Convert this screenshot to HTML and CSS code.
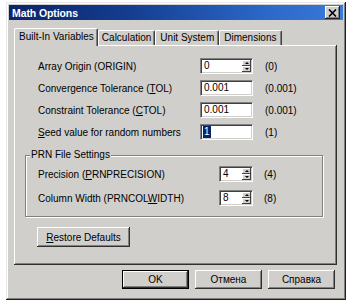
FILE: index.html
```html
<!DOCTYPE html>
<html>
<head>
<meta charset="utf-8">
<link rel="stylesheet" href="styles.css">
</head>
<body>
<div class="dialog">
  <div class="titlebar">
    <span class="title">Math Options</span>
    <span class="close"><svg width="9" height="8" viewBox="0 0 9 8"><path d="M1 0.5 L8 7.5 M8 0.5 L1 7.5" stroke="#000" stroke-width="1.6"/></svg></span>
  </div>
  <div class="content">
    <div class="tabs">
      <div class="tab active">Built-In Variables</div>
      <div class="tab">Calculation</div>
      <div class="tab">Unit System</div>
      <div class="tab">Dimensions</div>
    </div>
    <div class="panel">
      <div class="vars">
        <span class="lbl">Array Origin (ORIGIN)</span>
        <div class="field"><span class="val">0</span><span class="spinner"><span class="up"></span><span class="down"></span></span></div>
        <span class="def">(0)</span>

        <span class="lbl">Convergence Tolerance (<u>T</u>OL)</span>
        <div class="field"><span class="val">0.001</span></div>
        <span class="def">(0.001)</span>

        <span class="lbl">Constraint Tolerance (<u>C</u>TOL)</span>
        <div class="field"><span class="val">0.001</span></div>
        <span class="def">(0.001)</span>

        <span class="lbl"><u>S</u>eed value for random numbers</span>
        <div class="field"><span class="val sel">1</span></div>
        <span class="def">(1)</span>
      </div>
      <div class="group">
        <div class="group-title">PRN File Settings</div>
        <div class="prn">
          <span class="lbl">Precision (<u>P</u>RNPRECISION)</span>
          <div class="field"><span class="val">4</span><span class="spinner"><span class="up"></span><span class="down"></span></span></div>
          <span class="def">(4)</span>

          <span class="lbl">Column Width (PRNCOL<u>W</u>IDTH)</span>
          <div class="field"><span class="val">8</span><span class="spinner"><span class="up"></span><span class="down"></span></span></div>
          <span class="def">(8)</span>
        </div>
      </div>
      <button class="btn restore"><u>R</u>estore Defaults</button>
    </div>
    <div class="actions">
      <button class="btn ok">OK</button>
      <button class="btn">Отмена</button>
      <button class="btn">Справка</button>
    </div>
  </div>
</div>
</body>
</html>
```
FILE: styles.css
```css
* { box-sizing: border-box; }
html, body { margin: 0; padding: 0; background: #ffffff; }
body {
  font-family: "Liberation Sans", Arial, sans-serif;
  font-size: 10px;
  color: #000;
}
.dialog {
  margin: 2px 0 0 6px;
  width: 340px;
  height: 298px;
  padding: 3px;
  background: #d0cfcc;
  box-shadow: inset -1px -1px #202020, inset 1px 1px #e8e8e8, inset -2px -2px #808080, inset 2px 2px #ffffff;
}
.titlebar {
  height: 15px;
  display: flex;
  align-items: center;
  justify-content: space-between;
  padding: 0 3px 0 3px;
  background: linear-gradient(to right, #0a246a 0%, #143c8e 35%, #2a66c6 75%, #3a7ad8 100%);
}
.title {
  color: #fff;
  font-weight: bold;
  font-size: 10.5px;
  letter-spacing: -0.1px;
}
.close {
  width: 15px;
  height: 13px;
  display: flex;
  align-items: center;
  justify-content: center;
  background: #d0cfcc;
  box-shadow: inset -1px -1px #202020, inset 1px 1px #ffffff, inset -2px -2px #808080;
}
.content {
  padding: 8px 6px 0 5px;
}
.tabs {
  display: flex;
  align-items: flex-end;
  height: 17px;
}
.tab {
  height: 15px;
  line-height: 14px;
  padding: 0 4px;
  background: #d0cfcc;
  border-top: 1px solid #ffffff;
  border-left: 1px solid #ffffff;
  border-right: 1px solid #404040;
  border-radius: 2px 2px 0 0;
  box-shadow: inset -1px 0 #808080;
  white-space: nowrap;
}
.tab:nth-child(2) { padding: 0 3px; }
.tab.active {
  position: relative;
  z-index: 1;
  height: 18px;
  margin-bottom: -1px;
  line-height: 16px;
  padding: 0 3px 0 4px;
}
.panel {
  height: 220px;
  padding-top: 13px;
  background: #d0cfcc;
  box-shadow: inset -1px -1px #303030, inset 1px 1px #ffffff, inset -2px -2px #808080;
}
.vars {
  margin-left: 24px;
  display: grid;
  grid-template-columns: 150px 53px auto;
  grid-auto-rows: 16px;
  column-gap: 12px;
  row-gap: 6px;
  align-items: center;
}
.lbl { white-space: nowrap; }
.def { white-space: nowrap; }
.field {
  height: 16px;
  display: flex;
  align-items: stretch;
  background: #ffffff;
  border-top: 1px solid #808080;
  border-left: 1px solid #808080;
  border-right: 1px solid #ffffff;
  border-bottom: 1px solid #ffffff;
  box-shadow: inset 1px 1px #404040, inset -1px -1px #d0cfcc;
  padding: 1px;
}
.val {
  flex: 1;
  padding-left: 2px;
  line-height: 12px;
}
.val.sel {
  flex: 0 0 auto;
  background: #0a246a;
  color: #fff;
  padding: 0 1px;
  margin-left: 1px;
}
.spinner {
  width: 9px;
  display: flex;
  flex-direction: column;
}
.spinner span {
  flex: 1;
  display: flex;
  align-items: center;
  justify-content: center;
  background: #d0cfcc;
  box-shadow: inset -1px -1px #404040, inset 1px 1px #ffffff;
}
.spinner .up::before {
  content: "";
  border-left: 2px solid transparent;
  border-right: 2px solid transparent;
  border-bottom: 2px solid #000;
}
.spinner .down::before {
  content: "";
  border-left: 2px solid transparent;
  border-right: 2px solid transparent;
  border-top: 2px solid #000;
}
.group {
  margin: 15px 0 0 11px;
  width: 298px;
  height: 62px;
  border: 1px solid #808080;
  box-shadow: inset 1px 1px #ffffff, 1px 1px #ffffff;
}
.group-title {
  margin: -7px 0 0 4px;
  width: max-content;
  padding: 0 1px;
  line-height: 12px;
  background: #d0cfcc;
}
.prn {
  margin: 5px 0 0 12px;
  display: grid;
  grid-template-columns: 170px 34px auto;
  grid-auto-rows: 16px;
  column-gap: 11px;
  row-gap: 8px;
  align-items: center;
}
.btn {
  font-family: "Liberation Sans", Arial, sans-serif;
  font-size: 10px;
  color: #000;
  background: #d0cfcc;
  border: none;
  padding: 0;
  margin: 0;
  height: 19px;
  width: 67px;
  box-shadow: inset -1px -1px #303030, inset 1px 1px #ffffff, inset -2px -2px #808080;
}
.btn.ok {
  border: 1px solid #000;
}
.restore {
  display: block;
  margin: 10px 0 0 23px;
  width: 93px;
  height: 20px;
}
.actions {
  display: flex;
  justify-content: flex-end;
  gap: 6px;
  margin-top: 5px;
  padding-right: 2px;
}
```
